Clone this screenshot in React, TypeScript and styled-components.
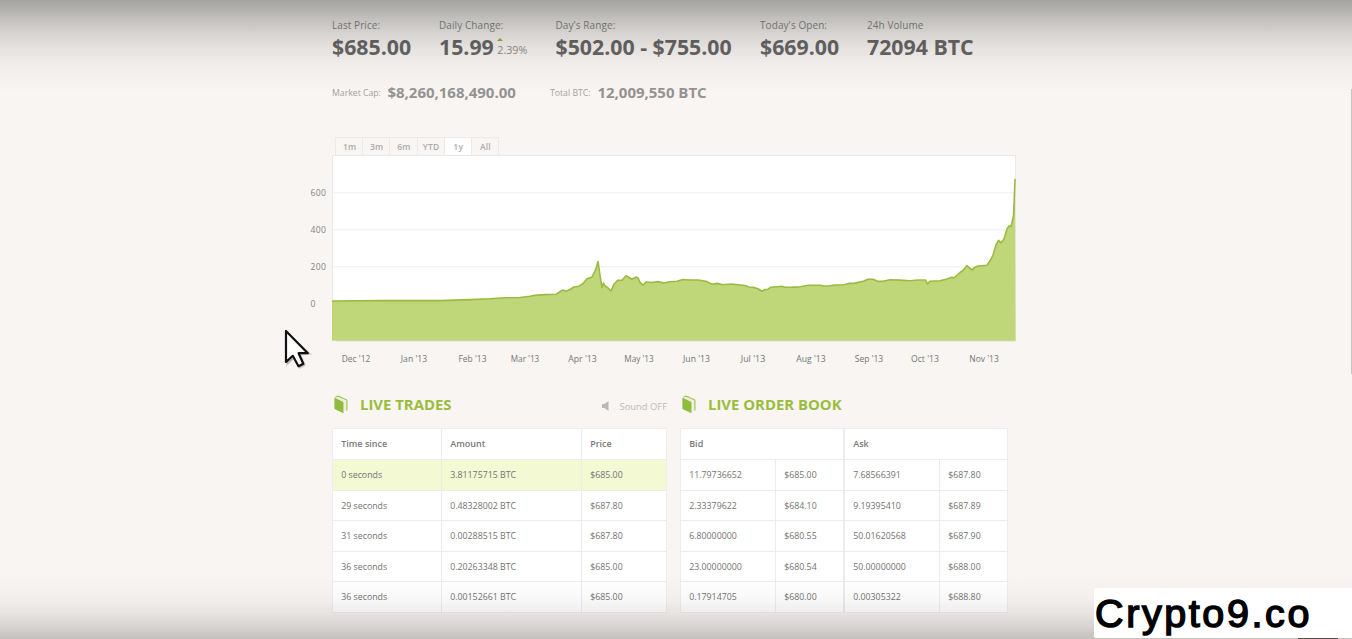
import React from "react";
import styled, { createGlobalStyle } from "styled-components";

const GlobalStyle = createGlobalStyle`
  * { box-sizing: border-box; }
  body {
    margin: 0;
    overflow: hidden;
    background: #f8f5f2;
    font-family: "Open Sans", "Noto Sans", sans-serif;
  }
`;

const Page = styled.div`
  position: relative;
  width: 1352px;
  height: 639px;
  overflow: hidden;
  background: #f8f5f2;
`;

const Main = styled.main`
  width: 716px;
  margin-left: 300px;
  padding: 17px 0 0 32px;
`;

const StatRow = styled.div`
  display: flex;
  white-space: nowrap;
`;

const Stat = styled.div<{ $width: number }>`
  width: ${(p) => p.$width}px;
  flex: none;
`;

const StatLabel = styled.div`
  height: 16px;
  font-size: 10px;
  line-height: 16px;
  letter-spacing: 0.08px;
  color: #8b8a89;
`;

const StatValue = styled.div`
  display: flex;
  height: 28px;
  font-size: 21.3px;
  font-weight: 700;
  line-height: 28px;
  color: #686767;
`;

const Change = styled.span`
  display: flex;
  flex-direction: column;
  margin-left: 3.5px;
  padding-top: 5px;
  font-size: 10.7px;
  font-weight: 400;
  line-height: 14px;
  color: #8f8e8d;
`;

const UpMark = styled.i`
  width: 0;
  height: 0;
  margin-bottom: 2px;
  border: 3.5px solid transparent;
  border-top: 0;
  border-bottom: 3.5px solid #97b63c;
`;

const CapRow = styled.div`
  display: flex;
  height: 20px;
  margin-top: 21px;
  line-height: 20px;
  white-space: nowrap;
`;

const Cap = styled.div<{ $width: number; $label: number }>`
  display: grid;
  grid-template-columns: ${(p) => p.$label}px 1fr;
  width: ${(p) => p.$width}px;
`;

const CapLabel = styled.span`
  padding-top: 1px;
  font-size: 8.7px;
  color: #a3a1a0;
`;

const CapValue = styled.span`
  font-size: 15px;
  font-weight: 700;
  letter-spacing: -0.02px;
  color: #949392;
`;

const Tabs = styled.div`
  display: flex;
  width: 164px;
  height: 18px;
  margin: 35px 0 0 3px;
  border: 1px solid #eceae8;
  border-bottom: 0;
`;

const Tab = styled.span<{ $active?: boolean }>`
  flex: 1;
  padding-left: 1px;
  border-left: 1px solid #eceae8;
  background: ${(p) => (p.$active ? "#fff" : "transparent")};
  font-size: 8.5px;
  font-weight: 600;
  line-height: 17px;
  text-align: center;
  letter-spacing: 0.2px;
  color: #acaaa9;
  &:first-child { border-left: 0; }
`;

const Chart = styled.svg`
  display: block;
  margin-left: -32px;
  font-family: "Open Sans", sans-serif;
`;

const Panels = styled.div`
  display: flex;
  gap: 13px;
  margin-top: 20px;
`;

const Panel = styled.section<{ $width: number }>`
  width: ${(p) => p.$width}px;
  flex: none;
`;

const PanelHead = styled.header`
  display: flex;
  align-items: center;
  height: 28px;
  margin-bottom: 10px;
  padding-left: 2px;
`;

const Title = styled.h2`
  flex: 1;
  margin: 0 0 0 11px;
  font-size: 14.9px;
  font-weight: 700;
  line-height: 28px;
  white-space: nowrap;
  color: #99bd3c;
`;

const Sound = styled.span`
  display: flex;
  align-items: center;
  gap: 10px;
  padding-top: 4px;
  font-size: 9.4px;
  color: #bdbbb9;
`;

const Table = styled.div`
  border: 1px solid #efedec;
  background: #fff;
`;

const Row = styled.div<{ $columns: string; $header?: boolean; $fresh?: boolean }>`
  display: grid;
  grid-template-columns: ${(p) => p.$columns};
  height: ${(p) => (p.$header ? 30 : 30.5)}px;
  border-top: ${(p) => (p.$header ? 0 : 1)}px solid #ececec;
  background: ${(p) => (p.$fresh ? "#f3f9d3" : "#fff")};
  font-size: ${(p) => (p.$header ? 9 : 8.8)}px;
  font-weight: ${(p) => (p.$header ? 600 : 400)};
  color: ${(p) => (p.$header ? "#7a7a7a" : "#747373")};
`;

const Cell = styled.span<{ $divide?: number }>`
  padding-left: 8.2px;
  border-right: ${(p) => p.$divide ?? 1}px solid #ececec;
  line-height: 30px;
  white-space: nowrap;
  &:last-child { border-right: 0; }
`;

const Shade = styled.div`
  position: absolute;
  inset: 0;
  pointer-events: none;
  background:
    linear-gradient(to bottom,
      rgba(0, 0, 0, 0.335) 0, rgba(0, 0, 0, 0.3) 6px, rgba(0, 0, 0, 0.22) 18px,
      rgba(0, 0, 0, 0.14) 33px, rgba(0, 0, 0, 0.08) 48px, rgba(0, 0, 0, 0.03) 66px,
      rgba(0, 0, 0, 0) 92px),
    linear-gradient(to top,
      rgba(0, 0, 0, 0.21) 0, rgba(0, 0, 0, 0.135) 13px, rgba(0, 0, 0, 0.065) 27px,
      rgba(0, 0, 0, 0.025) 42px, rgba(0, 0, 0, 0) 64px);
`;

const Pointer = styled.svg`
  position: absolute;
  left: 280px;
  top: 325px;
`;

const Scrollbar = styled.div`
  position: absolute;
  right: 0;
  top: 89px;
  width: 1px;
  height: 285px;
  background: #c5c4c3;
`;

const Watermark = styled.div`
  position: absolute;
  left: 1094px;
  top: 588px;
  width: 258px;
  height: 50px;
  padding-left: 1px;
  border-radius: 2px 0 0 2px;
  background: #fff;
  font-family: "Liberation Sans", sans-serif;
  font-size: 39.5px;
  line-height: 51px;
  letter-spacing: 2.6px;
  white-space: nowrap;
  color: #000;
  -webkit-text-stroke: 1.5px #000;
  stroke-linejoin: round;
`;

const BottomEdge = styled.div`
  position: absolute;
  left: 1298px;
  top: 638px;
  width: 40px;
  height: 1px;
  background: #594c4c;
`;

const line: [number, number][] = [
  [332, 301], [380, 300.6], [440, 300.6], [470, 299.6], [490, 298.8], [505, 297.8], [520, 297.5],
  [530, 296.3], [535, 295.4], [545, 294.6], [556, 294.3], [559, 292.3], [563, 290], [566, 291.2],
  [570, 289.5], [574, 287], [579, 286.2], [583, 283.5], [587, 278.8], [592, 277], [595, 271],
  [596.5, 267], [598, 261.5], [600, 275], [602, 287.5], [603.5, 283], [605, 286], [607, 287],
  [611, 291], [614, 284], [618, 280.2], [622, 280.3], [626, 275.8], [632, 279.3], [636, 277],
  [638, 278], [640, 282.3], [643, 285.2], [646, 282], [652, 282.5], [658, 281.6], [664, 283],
  [670, 281.7], [677, 281.3], [683, 279.6], [690, 280], [698, 280], [706, 281.3], [712, 284.3],
  [717, 283.4], [723, 284.7], [731, 284], [745, 285.5], [749, 287], [754, 287.4], [758, 288.8],
  [762, 291.3], [765, 289.5], [768, 289.2], [771, 287.2], [782, 286.3], [785, 287.2], [793, 287.1],
  [800, 286.7], [808, 285.3], [820, 285.2], [826, 286.2], [835, 285], [844, 284.7], [849, 283.2],
  [854, 283.4], [864, 281], [868, 279.2], [873, 279.3], [878, 281.4], [883, 281.2], [890, 279.7],
  [900, 280.1], [910, 280.7], [918, 280], [925.5, 280], [927.5, 284], [930, 281.3], [940, 280.7],
  [947, 279], [952, 277.2], [954, 278], [960, 272.5], [963, 270.5], [967, 265.5], [969.5, 268],
  [972.5, 270], [974, 267.7], [978, 266], [987, 265.3], [990, 261], [993, 255], [996, 245],
  [998.5, 240.3], [1001, 243], [1004, 239], [1007, 229], [1009, 226], [1011, 226.5],
  [1013.5, 216], [1014.2, 200], [1015, 179],
];
const pts = line.map(([x, y]) => `${x},${y}`).join(" ");

const months: [string, number, number][] = [
  ["Dec '12", 356, 28.5], ["Jan '13", 414, 26.5], ["Feb '13", 472.5, 28], ["Mar '13", 525, 28.5],
  ["Apr '13", 582.5, 28.5], ["May '13", 639, 29.5], ["Jun '13", 696.5, 27], ["Jul '13", 753, 24.5],
  ["Aug '13", 811, 29.5], ["Sep '13", 869, 28.5], ["Oct '13", 925, 28], ["Nov '13", 984, 29.5],
];

const grid: [string, number][] = [["600", 193], ["400", 230], ["200", 267], ["0", 304]];

const trades = [
  ["0 seconds", "3.81175715 BTC", "$685.00"],
  ["29 seconds", "0.48328002 BTC", "$687.80"],
  ["31 seconds", "0.00288515 BTC", "$687.80"],
  ["36 seconds", "0.20263348 BTC", "$685.00"],
  ["36 seconds", "0.00152661 BTC", "$685.00"],
];

const orders = [
  ["11.79736652", "$685.00", "7.68566391", "$687.80"],
  ["2.33379622", "$684.10", "9.19395410", "$687.89"],
  ["6.80000000", "$680.55", "50.01620568", "$687.90"],
  ["23.00000000", "$680.54", "50.00000000", "$688.00"],
  ["0.17914705", "$680.00", "0.00305322", "$688.80"],
];

const Book = () => (
  <svg width="15" height="19" viewBox="0 0 15 19">
    <path d="M0.4 3.4Q0.4 2.6 1.2 2.9L9 6.7Q9.5 7 9.5 7.6V18.2L1 14.2Q0.4 13.9 0.4 13.2Z" fill="#8fbb3f" />
    <path d="M1.4 2.2 4 1.1 12.3 4.7Q12.9 5 12.9 5.7V15.4" fill="none" stroke="#a3c45a" strokeWidth="1.2" strokeLinejoin="round" />
    <path d="M2.6 2.6 10.6 6.2Q11 6.4 11 7V16.3" fill="none" stroke="#dfe8c8" strokeWidth="0.9" />
  </svg>
);

const PriceChart = () => (
  <Chart width="716" height="215" viewBox="300 155 716 215">
    <rect x="332.5" y="155.5" width="683" height="185" fill="#fff" stroke="#ebe9e7" />
    {grid.map(([t, y]) => (
      <line key={t} x1="333" x2="1015" y1={y - 0.2} y2={y - 0.2} stroke="#efefef" />
    ))}
    <polygon points={`332,340.5 ${pts} 1015.5,340.5`} fill="#b4d162" fillOpacity="0.86" />
    <path d="M336 340.8H1015.5" stroke="#c6d2a4" />
    <polyline points={pts} fill="none" stroke="#9cba41" strokeWidth="1.6" strokeLinejoin="round" />
    {grid.map(([t, y]) => (
      <text key={t} x="310.5" y={y + 3} fontSize="8.6" fontWeight="500" fill="#858483"
        textLength={t.length * 5.1} lengthAdjust="spacing">{t}</text>
    ))}
    {months.map(([t, x, w]) => (
      <text key={t} x={x} y="361.7" fontSize="8.1" fill="#767574" textAnchor="middle"
        textLength={w} lengthAdjust="spacingAndGlyphs">{t}</text>
    ))}
  </Chart>
);

export default function App() {
  return (
    <Page>
      <GlobalStyle />
      <Main>
        <StatRow>
          <Stat $width={107}><StatLabel>Last Price:</StatLabel><StatValue>$685.00</StatValue></Stat>
          <Stat $width={116.5}>
            <StatLabel>Daily Change:</StatLabel>
            <StatValue>15.99<Change><UpMark />2.39%</Change></StatValue>
          </Stat>
          <Stat $width={204.5}><StatLabel>Day's Range:</StatLabel><StatValue>$502.00 - $755.00</StatValue></Stat>
          <Stat $width={107}><StatLabel>Today's Open:</StatLabel><StatValue>$669.00</StatValue></Stat>
          <Stat $width={130}><StatLabel>24h Volume</StatLabel><StatValue>72094 BTC</StatValue></Stat>
        </StatRow>
        <CapRow>
          <Cap $width={218} $label={55.5}><CapLabel>Market Cap:</CapLabel><CapValue>$8,260,168,490.00</CapValue></Cap>
          <Cap $width={180} $label={47.5}><CapLabel>Total BTC:</CapLabel><CapValue>12,009,550 BTC</CapValue></Cap>
        </CapRow>
        <Tabs>
          {["1m", "3m", "6m", "YTD", "1y", "All"].map((t) => (
            <Tab key={t} $active={t === "1y"}>{t}</Tab>
          ))}
        </Tabs>
        <PriceChart />
        <Panels>
          <Panel $width={335}>
            <PanelHead>
              <Book />
              <Title>LIVE TRADES</Title>
              <Sound>
                <svg width="9" height="10" viewBox="0 0 9 10">
                  <path d="M1 3H3.5L7.5 0V10L3.5 7H1Z" fill="#b9b8b5" />
                </svg>
                Sound OFF
              </Sound>
            </PanelHead>
            <Table>
              <Row $header $columns="109px 140px 1fr">
                <Cell>Time since</Cell><Cell>Amount</Cell><Cell>Price</Cell>
              </Row>
              {trades.map((r, i) => (
                <Row key={i} $fresh={i === 0} $columns="109px 140px 1fr">
                  {r.map((c, j) => <Cell key={j}>{c}</Cell>)}
                </Row>
              ))}
            </Table>
          </Panel>
          <Panel $width={328}>
            <PanelHead>
              <Book />
              <Title>LIVE ORDER BOOK</Title>
            </PanelHead>
            <Table>
              <Row $header $columns="164px 1fr">
                <Cell $divide={2}>Bid</Cell><Cell>Ask</Cell>
              </Row>
              {orders.map((r, i) => (
                <Row key={i} $columns="95px 69px 95px 1fr">
                  {r.map((c, j) => <Cell key={j} $divide={j === 1 ? 2 : 1}>{c}</Cell>)}
                </Row>
              ))}
            </Table>
          </Panel>
        </Panels>
      </Main>
      <Shade />
      <Scrollbar />
      <Pointer width="36" height="48" viewBox="280 325 36 48">
        <path d="M287 332.5V364.5L294 358L299.5 368L305 365L300 354.5L310 353.8Z" fill="#0003" stroke="#0002" strokeWidth="2" />
        <path d="M286 331V362L292.8 355.8L298.5 366.2L303.3 363.7L298.6 353.2H307.8Z"
          fill="#fff" stroke="#111" strokeWidth="2.2" strokeLinejoin="round" />
      </Pointer>
      <Watermark>Crypto9.co</Watermark>
      <BottomEdge />
    </Page>
  );
}
